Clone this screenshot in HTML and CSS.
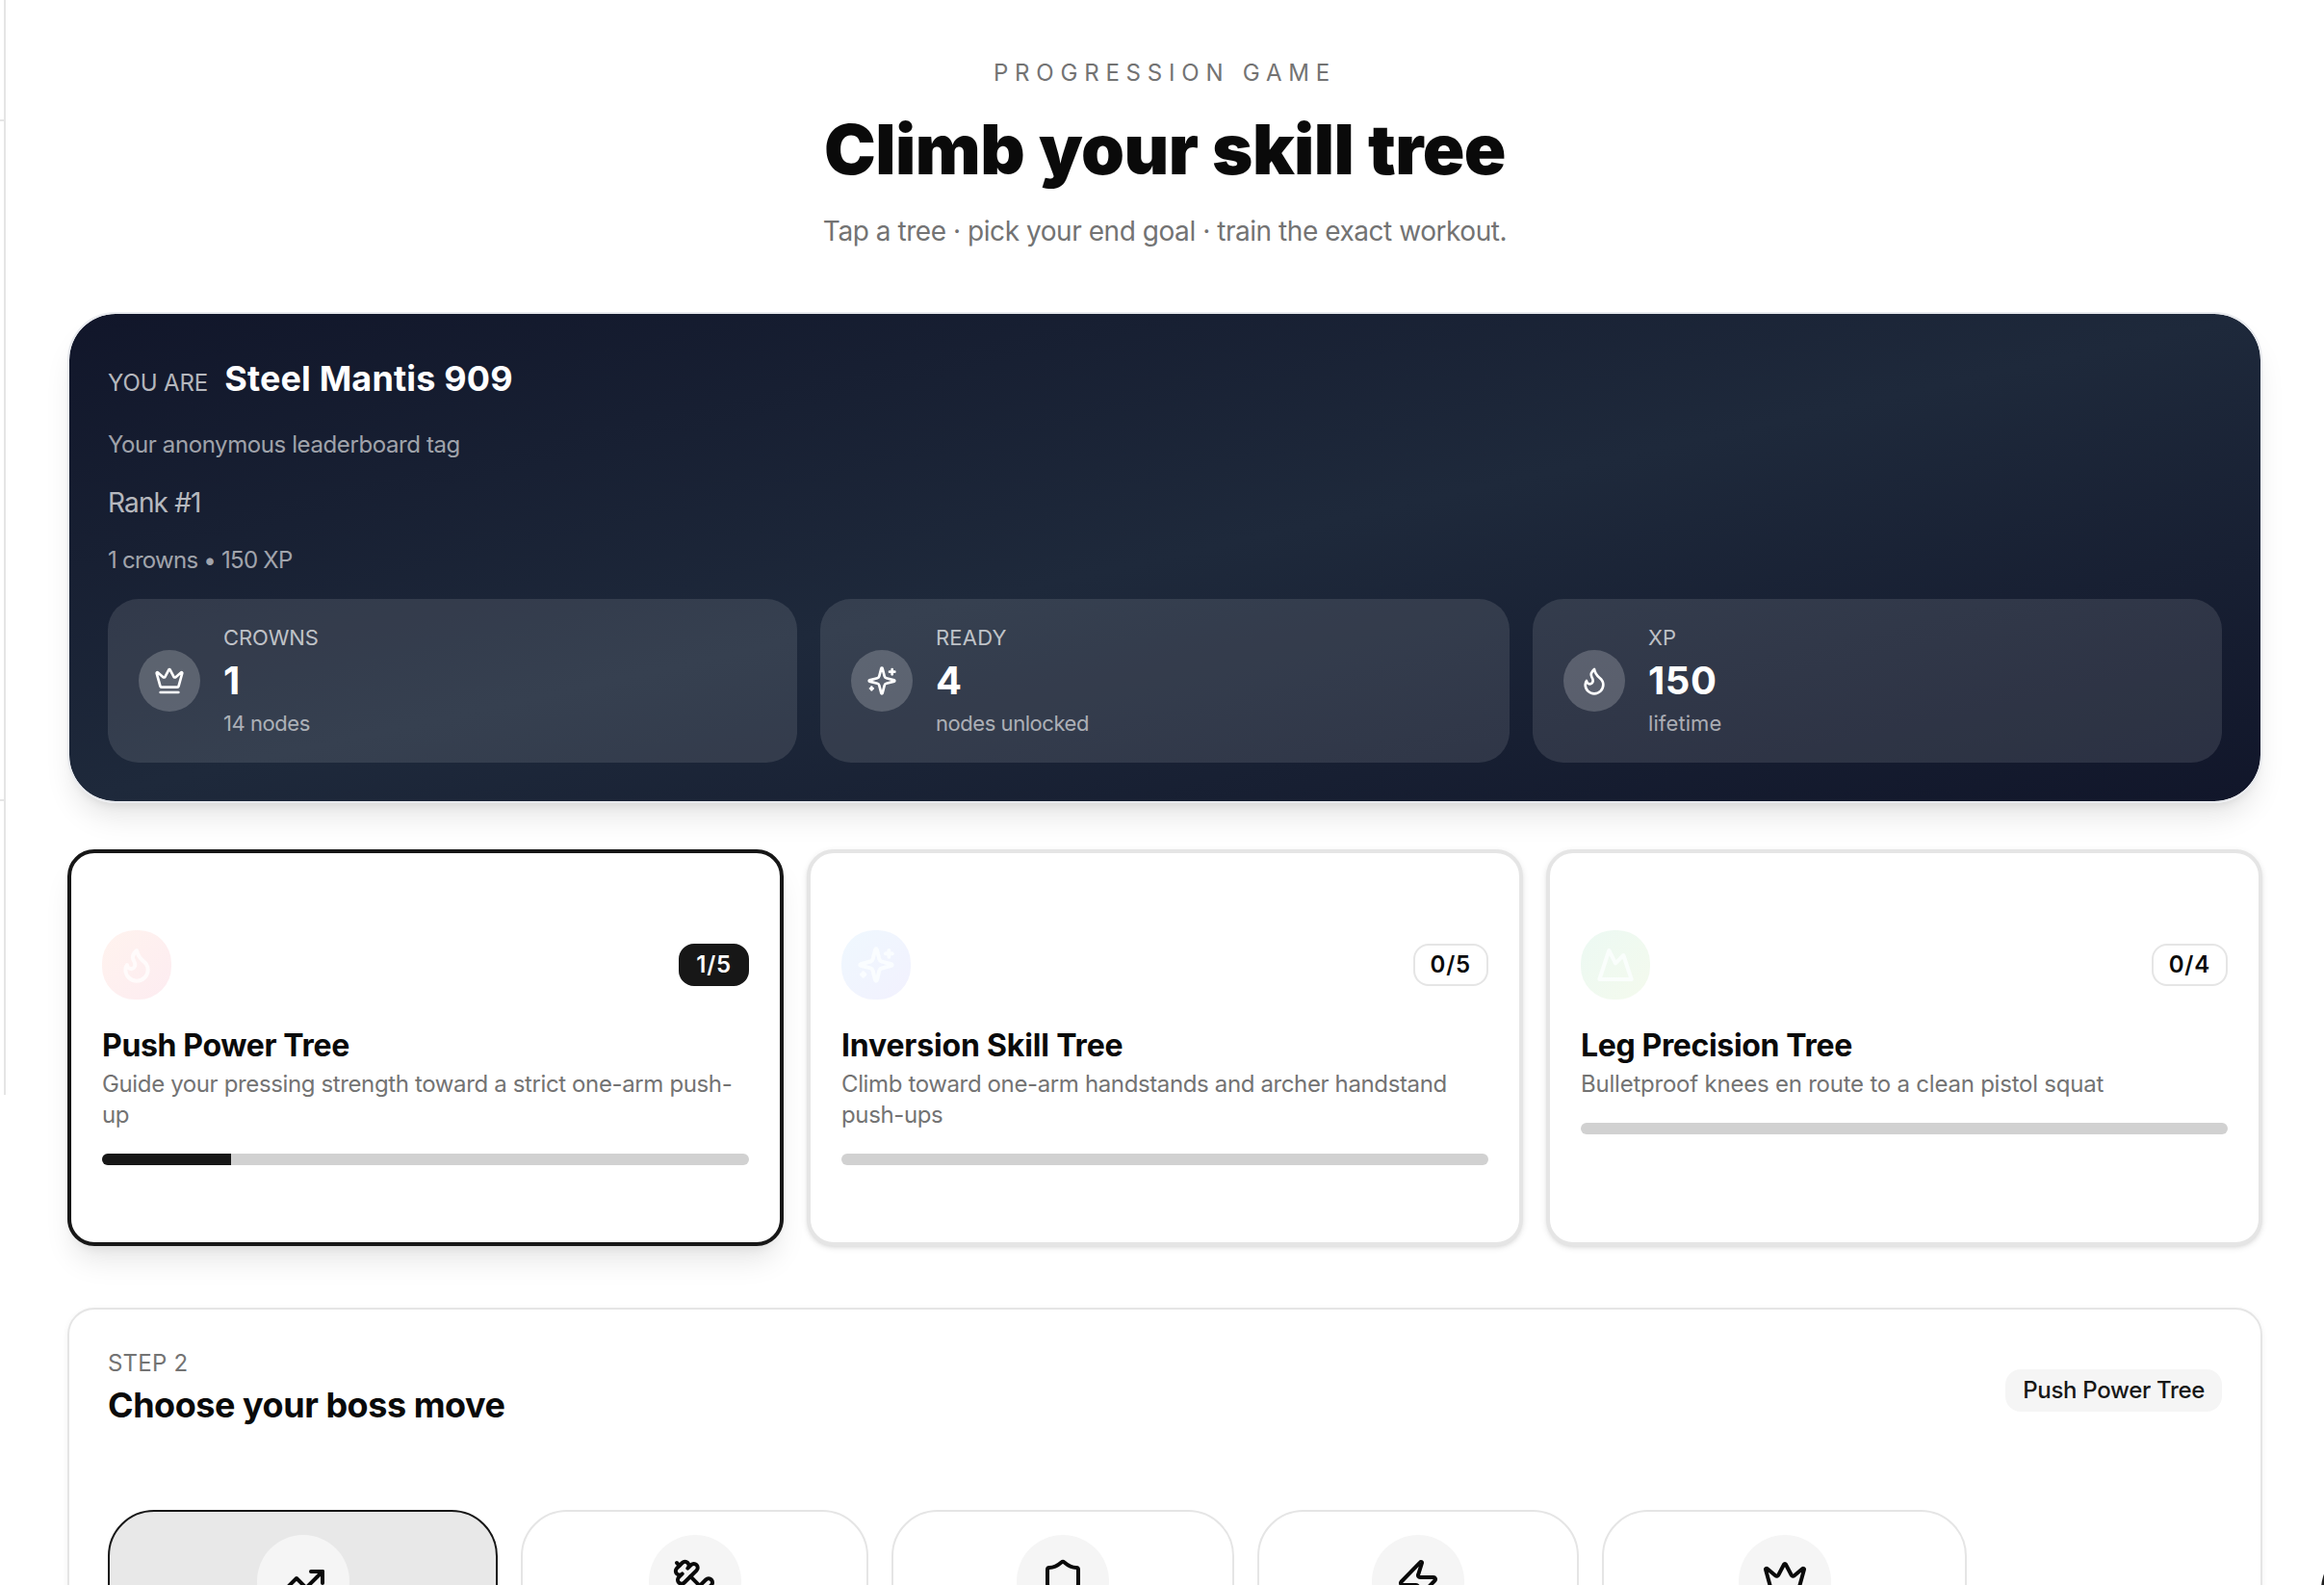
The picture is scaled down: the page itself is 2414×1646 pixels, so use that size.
FILE: index.html
```html
<!DOCTYPE html>
<html lang="en">
<head>
<meta charset="utf-8">
<title>Climb your skill tree</title>
<link rel="stylesheet" href="styles.css">
</head>
<body>
<svg class="sprite" aria-hidden="true">
  <symbol id="crown" viewBox="0 0 24 24"><path d="M11.562 3.266a.5.5 0 0 1 .876 0L15.39 8.87a1 1 0 0 0 1.516.294L21.183 5.5a.5.5 0 0 1 .798.519l-2.834 10.246a1 1 0 0 1-.956.734H5.81a1 1 0 0 1-.957-.734L2.02 6.02a.5.5 0 0 1 .798-.519l4.276 3.664a1 1 0 0 0 1.516-.294z"/><path d="M5 21h14"/></symbol>
  <symbol id="sparkles" viewBox="0 0 24 24"><path d="M9.937 15.5A2 2 0 0 0 8.5 14.063l-6.135-1.582a.5.5 0 0 1 0-.962L8.5 9.936A2 2 0 0 0 9.937 8.5l1.582-6.135a.5.5 0 0 1 .963 0L14.063 8.5A2 2 0 0 0 15.5 9.937l6.135 1.581a.5.5 0 0 1 0 .964L15.5 14.063a2 2 0 0 0-1.437 1.437l-1.582 6.135a.5.5 0 0 1-.963 0z"/><path d="M20 3v4"/><path d="M22 5h-4"/><path d="M4 17v2"/><path d="M5 18H3"/></symbol>
  <symbol id="flame" viewBox="0 0 24 24"><path d="M8.5 14.5A2.5 2.5 0 0 0 11 12c0-1.38-.5-2-1-3-1.072-2.143-.224-4.054 2-6 .5 2.5 2 4.9 4 6.5 2 1.6 3 3.5 3 5.5a7 7 0 1 1-14 0c0-1.153.433-2.294 1-3a2.5 2.5 0 0 0 2.5 2.5z"/></symbol>
  <symbol id="mountain" viewBox="0 0 24 24"><path d="m8 3 4 8 5-5 5 15H2L8 3z"/></symbol>
  <symbol id="trending" viewBox="0 0 24 24"><path d="M16 7h6v6"/><path d="m22 7-8.5 8.5-5-5L2 17"/></symbol>
  <symbol id="dumbbell" viewBox="0 0 24 24"><path d="M14.4 14.4 9.6 9.6"/><path d="M18.657 21.485a2 2 0 1 1-2.829-2.828l-1.767 1.768a2 2 0 1 1-2.829-2.829l6.364-6.364a2 2 0 1 1 2.829 2.829l-1.768 1.767a2 2 0 1 1 2.828 2.829z"/><path d="m21.5 21.5-1.4-1.4"/><path d="M3.9 3.9 2.5 2.5"/><path d="M6.404 12.768a2 2 0 1 1-2.829-2.829l1.768-1.767a2 2 0 1 1-2.828-2.829l2.828-2.828a2 2 0 1 1 2.829 2.828l1.767-1.768a2 2 0 1 1 2.829 2.829z"/></symbol>
  <symbol id="shield" viewBox="0 0 24 24"><path d="M20 13c0 5-3.5 7.5-7.66 8.95a1 1 0 0 1-.67-.01C7.5 20.5 4 18 4 13V6a1 1 0 0 1 1-1c2 0 4.5-1.2 6.24-2.72a1.17 1.17 0 0 1 1.52 0C14.51 3.81 17 5 19 5a1 1 0 0 1 1 1z"/></symbol>
  <symbol id="zap" viewBox="0 0 24 24"><path d="M4 14a1 1 0 0 1-.78-1.63l9.9-10.2a.5.5 0 0 1 .86.46l-1.92 6.02A1 1 0 0 0 13 10h7a1 1 0 0 1 .78 1.63l-9.9 10.2a.5.5 0 0 1-.86-.46l1.92-6.02A1 1 0 0 0 11 14z"/></symbol>
</svg>
<div class="app">
  <aside class="sidebar"><div class="sidebar-head"></div><div class="sidebar-body"></div></aside>
  <main class="main">
    <header class="intro">
      <p class="eyebrow">PROGRESSION GAME</p>
      <h1 class="headline">Climb your skill tree</h1>
      <p class="lead">Tap a tree · pick your end goal · train the exact workout.</p>
    </header>

    <section class="hero">
      <div class="identity"><span class="identity-label">YOU ARE</span><span class="identity-name">Steel Mantis 909</span></div>
      <p class="tag-note">Your anonymous leaderboard tag</p>
      <p class="rank">Rank #1</p>
      <p class="totals">1 crowns • 150 XP</p>
      <div class="stats">
        <div class="stat">
          <div class="stat-icon"><svg class="icon"><use href="#crown"/></svg></div>
          <div><p class="stat-label">CROWNS</p><p class="stat-value">1</p><p class="stat-sub">14 nodes</p></div>
        </div>
        <div class="stat">
          <div class="stat-icon"><svg class="icon"><use href="#sparkles"/></svg></div>
          <div><p class="stat-label ready">READY</p><p class="stat-value">4</p><p class="stat-sub">nodes unlocked</p></div>
        </div>
        <div class="stat">
          <div class="stat-icon"><svg class="icon"><use href="#flame"/></svg></div>
          <div><p class="stat-label">XP</p><p class="stat-value">150</p><p class="stat-sub lifetime">lifetime</p></div>
        </div>
      </div>
    </section>

    <section class="trees">
      <article class="tree tree-active">
        <div class="tree-top"><div class="tree-icon push"><svg class="icon"><use href="#flame"/></svg></div><span class="count count-solid">1/5</span></div>
        <h2 class="tree-title">Push Power Tree</h2>
        <p class="tree-desc">Guide your pressing strength toward a strict one-arm push-up</p>
        <div class="bar"><div class="bar-fill" style="width:20%"></div></div>
      </article>
      <article class="tree">
        <div class="tree-top"><div class="tree-icon inversion"><svg class="icon"><use href="#sparkles"/></svg></div><span class="count">0/5</span></div>
        <h2 class="tree-title inversion-title">Inversion Skill Tree</h2>
        <p class="tree-desc">Climb toward one-arm handstands and archer handstand push-ups</p>
        <div class="bar"></div>
      </article>
      <article class="tree">
        <div class="tree-top"><div class="tree-icon leg"><svg class="icon"><use href="#mountain"/></svg></div><span class="count">0/4</span></div>
        <h2 class="tree-title">Leg Precision Tree</h2>
        <p class="tree-desc leg-desc">Bulletproof knees en route to a clean pistol squat</p>
        <div class="bar"></div>
      </article>
    </section>

    <section class="boss">
      <div class="boss-head">
        <div><p class="step">STEP 2</p><h2 class="boss-title">Choose your boss move</h2></div>
        <span class="chip">Push Power Tree</span>
      </div>
      <div class="moves">
        <div class="move move-active"><div class="move-icon"><svg class="icon"><use href="#trending"/></svg></div></div>
        <div class="move"><div class="move-icon"><svg class="icon"><use href="#dumbbell"/></svg></div></div>
        <div class="move"><div class="move-icon"><svg class="icon"><use href="#shield"/></svg></div></div>
        <div class="move"><div class="move-icon"><svg class="icon"><use href="#zap"/></svg></div></div>
        <div class="move"><div class="move-icon"><svg class="icon"><use href="#crown"/></svg></div></div>
      </div>
    </section>
  </main>
</div>
<div class="fab"></div>
</body>
</html>
```

FILE: styles.css
```css
* { box-sizing: border-box; margin: 0; padding: 0; }
html, body { height: 1646px; overflow: hidden; }
body { background: #fff; color: #0a0a0a; font-family: Inter, "Liberation Sans", sans-serif; font-weight: 430; }
.sprite { display: none; }
.icon { display: block; width: 32px; height: 32px; fill: none; stroke: currentColor; stroke-width: 2; stroke-linecap: round; stroke-linejoin: round; }
.app { display: flex; height: 1646px; overflow: hidden; }

.sidebar { flex: none; width: 6px; height: 1137px; border-right: 2px solid #e5e5e5; }
.sidebar-head { height: 126px; border-bottom: 2px solid #e5e5e5; }
.sidebar-body { height: 706px; border-bottom: 2px solid #e5e5e5; }
.main { flex: 1; padding: 60px 64px 0; }

.intro { text-align: center; }
.eyebrow { font-size: 24px; line-height: 32px; letter-spacing: 6.8px; color: #737373; }
.headline { margin-top: 27px; font-size: 72px; line-height: 72px; font-weight: 900; letter-spacing: -0.55px; word-spacing: 1px; }
.lead { margin-top: 29px; font-size: 28px; line-height: 40px; letter-spacing: -0.45px; color: #737373; }

.hero { margin-top: 64px; height: 510px; padding: 43px 40px 40px; border: 2px solid #e8eaee; border-radius: 50px; background: linear-gradient(to bottom right, #11162a, #1e293b 50%, #11162a) padding-box; color: #fff; box-shadow: 0 20px 30px -6px rgba(0,0,0,.1), 0 8px 12px -8px rgba(0,0,0,.12); }
.identity { display: flex; align-items: baseline; gap: 17px; height: 48px; line-height: 48px; }
.identity-label { font-size: 24px; letter-spacing: -0.1px; color: rgba(255,255,255,.7); }
.identity-name { font-size: 36px; font-weight: 700; letter-spacing: 0.15px; }
.tag-note { margin-top: 29px; font-size: 24px; line-height: 32px; letter-spacing: -0.4px; color: rgba(255,255,255,.6); }
.rank { margin-top: 24px; font-size: 28px; line-height: 40px; letter-spacing: -0.85px; color: rgba(255,255,255,.7); }
.totals { margin-top: 24px; font-size: 24px; line-height: 32px; letter-spacing: -0.75px; color: rgba(255,255,255,.6); }
.stats { display: grid; grid-template-columns: repeat(3, 1fr); gap: 24px; margin-top: 24px; }
.stat { display: flex; gap: 24px; height: 170px; padding: 24px 32px; border-radius: 32px; background: rgba(255,255,255,.11); }
.stat-icon { align-self: center; display: flex; align-items: center; justify-content: center; width: 64px; height: 64px; border-radius: 50%; background: rgba(255,255,255,.2); }
.stat-label { font-size: 22px; line-height: 32px; letter-spacing: -0.1px; color: rgba(255,255,255,.7); }
.ready { letter-spacing: 0.2px; }
.stat-value { margin-top: 5px; font-size: 40px; line-height: 48px; font-weight: 700; letter-spacing: 0.6px; }
.stat-sub { margin-top: 4px; font-size: 22px; line-height: 32px; letter-spacing: -0.45px; color: rgba(255,255,255,.6); }
.lifetime { letter-spacing: 0.1px; }

.trees { display: grid; grid-template-columns: repeat(3, 1fr); gap: 24px; margin-top: 48px; }
.tree { height: 412px; padding: 80px 32px; border: 4px solid #e5e5e5; border-radius: 28px; background: #fff; box-shadow: 0 2px 6px rgba(0,0,0,.1), 0 2px 4px -2px rgba(0,0,0,.1); }
.tree-active { border-color: #171717; box-shadow: 0 20px 30px -6px rgba(0,0,0,.1), 0 8px 12px -8px rgba(0,0,0,.1); }
.tree-top { display: flex; align-items: center; justify-content: space-between; height: 72px; }
.tree-icon { display: flex; align-items: center; justify-content: center; width: 72px; height: 72px; border-radius: 34px; }
.tree-icon .icon { width: 40px; height: 40px; stroke-width: 2.4; }
.push { background: linear-gradient(135deg, #fff3ee, #fdecf1); color: #fffbfb; }
.inversion { background: linear-gradient(135deg, #eff8fe, #f2f1fe); color: #fafdff; }
.leg { background: linear-gradient(135deg, #ecf9f3, #f4faed); color: #fafefc; }
.count { height: 44px; padding: 0 16px; border: 2px solid #e5e5e5; border-radius: 16px; font-size: 24px; line-height: 40px; font-weight: 600; letter-spacing: 0.8px; }
.count-solid { background: #171717; border-color: #171717; color: #fff; }
.tree-title { margin-top: 28px; font-size: 32px; line-height: 40px; font-weight: 650; letter-spacing: -0.35px; }
.inversion-title { letter-spacing: -0.17px; }
.tree-desc { margin-top: 4px; font-size: 24px; line-height: 32px; letter-spacing: -0.37px; color: #737373; }
.leg-desc { letter-spacing: -0.22px; }
.bar { margin-top: 24px; height: 12px; border-radius: 6px; background: #d1d1d1; overflow: hidden; }
.bar-fill { height: 100%; background: #171717; }

.boss { margin-top: 64px; height: 600px; padding: 40px 40px; border: 2px solid #e5e5e5; border-radius: 28px; background: #fff; box-shadow: 0 2px 6px rgba(0,0,0,.06); }
.boss-head { display: flex; justify-content: space-between; align-items: flex-start; }
.step { font-size: 24px; line-height: 32px; letter-spacing: 0.2px; color: #737373; }
.boss-title { margin-top: 3px; font-size: 36px; line-height: 48px; font-weight: 650; letter-spacing: -0.47px; }
.chip { height: 44px; margin-top: 22px; padding: 0 18px; border-radius: 16px; background: #f5f5f5; color: #171717; font-size: 24px; line-height: 44px; font-weight: 500; letter-spacing: -0.32px; }
.moves { display: grid; grid-template-columns: 405px 361px 356px 334px 379px; gap: 24px; margin-top: 85px; }
.move { display: flex; justify-content: center; height: 300px; padding-top: 24px; border: 2px solid #e5e5e5; border-radius: 48px; background: #fff; }
.move-active { background: #e8e8e8; border-color: #171717; }
.move-icon { display: flex; align-items: center; justify-content: center; width: 96px; height: 96px; border-radius: 50%; background: #f5f5f5; }
.move-icon .icon { width: 48px; height: 48px; }

/* Floating action button, partly past the right edge */
.fab { position: absolute; left: 2410.5px; top: 1603px; width: 96px; height: 96px; border-radius: 50%; background: #1f1f1f; }
```
